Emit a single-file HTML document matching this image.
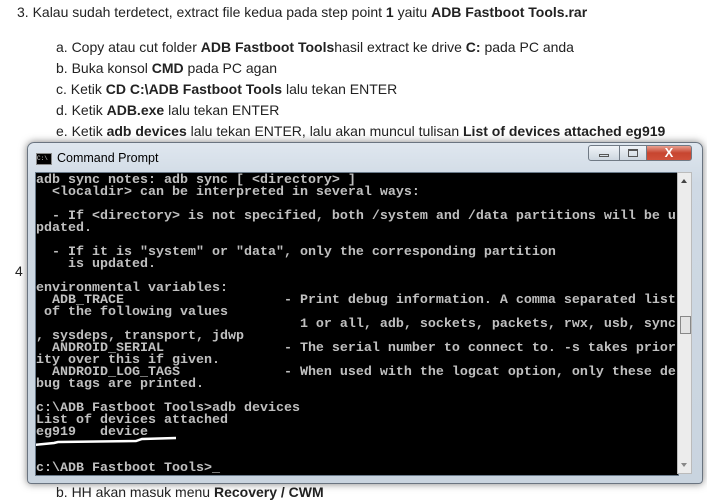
<!DOCTYPE html><html><head><style>
body{margin:0;width:707px;height:494px;overflow:hidden;background:#fff;position:relative;font-family:"Liberation Sans",Arial,sans-serif;font-size:14px;color:#222}
.t{position:absolute;white-space:nowrap;line-height:16px}
.win{position:absolute;left:27px;top:142px;width:674px;height:340px;border-radius:7px 7px 4px 4px;background:linear-gradient(#dfe7ef,#cfd9e4 40px,#c9d4df);border:1px solid #6a7480;box-shadow:0 0 8px rgba(0,0,0,.5)}
.con{position:absolute;left:35px;top:172px;width:642px;height:302px;background:#000;border:1px solid #6b7b8b;overflow:hidden}
pre{margin:0;position:absolute;left:0;top:2px;font-family:"Liberation Mono",monospace;font-size:13.33px;line-height:12px;color:#c0c0c0;font-weight:bold}
.sb{position:absolute;left:677px;top:172px;width:15px;height:302px;background:#ececec;border:1px solid #bbb;box-sizing:border-box}
.btn{position:absolute;top:145px;height:16px;border:1px solid #707a85;box-sizing:border-box;background:linear-gradient(#f0f4f8,#cdd6df)}
</style></head><body>
<div class="t" style="left:17px;top:4px">3. Kalau sudah terdetect, extract file kedua pada step point <b>1</b> yaitu <b>ADB Fastboot Tools.rar</b></div>
<div class="t" style="left:56px;top:39px">a. Copy atau cut folder <b>ADB Fastboot Tools</b>hasil extract ke drive <b>C:</b> pada PC anda</div>
<div class="t" style="left:56px;top:60px">b. Buka konsol <b>CMD</b> pada PC agan</div>
<div class="t" style="left:56px;top:81px">c. Ketik <b>CD C:\ADB Fastboot Tools</b> lalu tekan ENTER</div>
<div class="t" style="left:56px;top:102px">d. Ketik <b>ADB.exe</b> lalu tekan ENTER</div>
<div class="t" style="left:56px;top:123px">e. Ketik <b>adb devices</b> lalu tekan ENTER, lalu akan muncul tulisan <b>List of devices attached eg919</b></div>
<div class="t" style="left:15px;top:263px">4</div>
<div class="t" style="left:56px;top:484px">b. HH akan masuk menu <b>Recovery / CWM</b></div>
<div class="win"></div>
<div style="position:absolute;left:36px;top:153px;width:14px;height:10px;background:#000;border:1px solid #888;color:#ccc;font-size:6px;line-height:10px;font-family:'Liberation Mono'">C:\</div>
<div class="t" style="left:57px;top:150px;font-size:12.5px;color:#000">Command Prompt</div>
<div class="btn" style="left:588px;width:32px;border-radius:3px 0 0 3px"><div style="position:absolute;left:10px;top:8px;width:10px;height:3px;border:1px solid #555;box-sizing:border-box"></div></div>
<div class="btn" style="left:619px;width:28px"><div style="position:absolute;left:8px;top:3px;width:10px;height:8px;border:1px solid #555;border-top-width:2px;box-sizing:border-box"></div></div>
<div class="btn" style="left:646px;width:46px;border-radius:0 3px 3px 0;background:linear-gradient(#e8a090,#c7452f 50%,#d0503a)"><div style="position:absolute;left:0;width:44px;top:-1px;text-align:center;color:#fff;font-weight:bold;font-size:13px">X</div></div>
<div class="con"><pre>adb sync notes: adb sync [ &lt;directory&gt; ]
  &lt;localdir&gt; can be interpreted in several ways:

  - If &lt;directory&gt; is not specified, both /system and /data partitions will be u
pdated.

  - If it is "system" or "data", only the corresponding partition
    is updated.

environmental variables:
  ADB_TRACE                    - Print debug information. A comma separated list
 of the following values
                                 1 or all, adb, sockets, packets, rwx, usb, sync
, sysdeps, transport, jdwp
  ANDROID_SERIAL               - The serial number to connect to. -s takes prior
ity over this if given.
  ANDROID_LOG_TAGS             - When used with the logcat option, only these de
bug tags are printed.

c:\ADB Fastboot Tools&gt;adb devices
List of devices attached
eg919   device


c:\ADB Fastboot Tools&gt;_</pre>
<svg style="position:absolute;left:0;top:0" width="642" height="302"><path d="M-2 272 L18 270 L22 269 L100 268 L106 266 L140 265" stroke="#fff" stroke-width="2.5" fill="none"/></svg></div>
<div class="sb"><div style="position:absolute;left:3px;top:6px;border:3px solid transparent;border-bottom:4px solid #444;border-top:0"></div><div style="position:absolute;left:2px;top:143px;width:9px;height:16px;border:1px solid #888;background:#e4e4e4"></div><div style="position:absolute;left:3px;bottom:6px;border:3px solid transparent;border-top:4px solid #888;border-bottom:0"></div></div>
</body></html>
